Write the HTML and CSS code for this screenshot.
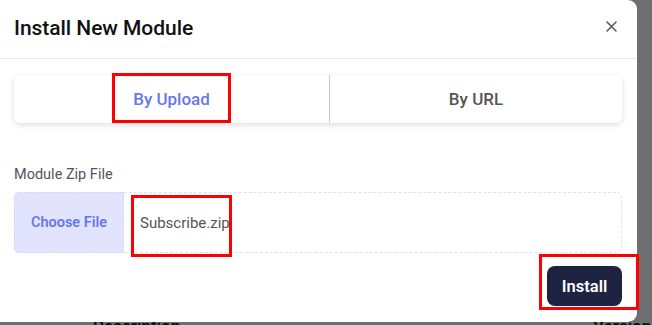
FILE: index.html
```html
<!DOCTYPE html>
<html>
<head>
<meta charset="utf-8">
<link rel="stylesheet" href="styles.css">
</head>
<body>
<div class="page">
  <div class="table-head">
    <span class="th th-desc">Description</span>
    <span class="th th-ver">Version</span>
  </div>
</div>
<div class="overlay"></div>
<div class="modal">
  <div class="modal-header">
    <h2 class="modal-title">Install New Module</h2>
    <button class="close" aria-label="Close">
      <svg width="11" height="11" viewBox="0 0 11 11"><path d="M1 1L10 10M10 1L1 10" stroke="#555" stroke-width="1.5" stroke-linecap="round"/></svg>
    </button>
  </div>
  <div class="modal-body">
    <div class="tabs">
      <div class="tab tab-upload active"><span class="mark mark-tab">By Upload</span></div>
      <div class="tab-divider"></div>
      <div class="tab tab-url">By URL</div>
    </div>
    <label class="field-label">Module Zip File</label>
    <div class="file-input">
      <span class="choose">Choose File</span>
      <span class="file-name">Subscribe.zip</span>
      <span class="mark-file"></span>
    </div>
    <div class="actions">
      <span class="mark mark-btn"><button class="install">Install</button></span>
    </div>
  </div>
</div>
</body>
</html>
```
FILE: styles.css
```css
* { box-sizing: border-box; }
html, body { margin: 0; padding: 0; }
body {
  width: 652px;
  height: 325px;
  overflow: hidden;
  background: #f4f5f8;
  font-family: "Roboto", "Liberation Sans", sans-serif;
  position: relative;
}
.page { padding-top: 316px; }
.table-head {
  display: flex;
  padding-left: 93px;
  font-size: 17px;
  font-weight: 600;
  color: #222;
  white-space: nowrap;
}
.th-desc { flex: 0 0 500px; }
.overlay {
  position: absolute;
  inset: 0;
  background: rgba(0,0,0,0.55);
}
.modal {
  position: absolute;
  left: 0;
  top: 0;
  width: 637px;
  height: 322px;
  background: #fff;
  border-radius: 0 9px 9px 0;
}
.modal-header {
  height: 59px;
  border-bottom: 1px solid #e9e9ec;
  display: flex;
  align-items: center;
  justify-content: space-between;
  padding: 0 20px 3px 14px;
}
.modal-title {
  margin: 0;
  font-size: 21px;
  font-weight: 500;
  color: #111;
  letter-spacing: -0.05px;
}
.close {
  border: 0;
  background: none;
  padding: 0;
  display: flex;
  margin-top: -2px;
}
.modal-body { padding: 16px 15px 0 14px; }
.tabs {
  display: flex;
  align-items: stretch;
  height: 48px;
  background: #fff;
  border-radius: 6px;
  box-shadow: 0 2px 6px rgba(0,0,0,0.13);
}
.tab {
  display: flex;
  align-items: center;
  justify-content: center;
  font-size: 17px;
  line-height: 20px;
  font-weight: 500;
  color: #555;
}
.tab-upload { flex: 0 0 315px; }
.tab-url { flex: 1; }
.tab.active { color: #6777ef; }
.tab-divider { width: 1px; background: #c9c9c9; }
.mark { position: relative; }
.mark::after {
  content: "";
  position: absolute;
  border: 3px solid #ff0000;
}
.mark-tab::after { left: -21px; right: -21px; top: -16px; bottom: -14px; }
.field-label {
  display: block;
  margin-top: 43px;
  font-size: 14.5px;
  line-height: 18px;
  color: #555;
}
.file-input {
  position: relative;
  margin-top: 8px;
  height: 61px;
  border: 1px dashed #dcdff7;
  border-radius: 5px;
  display: flex;
  align-items: center;
}
.choose {
  align-self: stretch;
  width: 110px;
  margin: -1px 0 -1px -1px;
  background: #e1e4fc;
  border: 1px dashed #d4d8f5;
  border-radius: 5px 0 0 5px;
  display: flex;
  align-items: center;
  justify-content: center;
  color: #6777ef;
  font-size: 14.5px;
  font-weight: 600;
}
.file-name {
  margin-left: 16px;
  font-size: 15px;
  color: #555;
}
.mark-file {
  position: absolute;
  left: 116px;
  top: 2px;
  width: 101px;
  height: 62px;
  border: 3px solid #ff0000;
}
.actions {
  display: flex;
  justify-content: flex-end;
  margin-top: 13px;
}
.install {
  width: 75px;
  height: 40px;
  border: 0;
  border-radius: 8px;
  background: #1d2340;
  color: #fff;
  font-family: inherit;
  font-size: 16.5px;
  font-weight: 600;
  display: block;
}
.mark-btn { display: block; }
.mark-btn::after { left: -8px; right: -17px; top: -12px; bottom: -4px; }
```
